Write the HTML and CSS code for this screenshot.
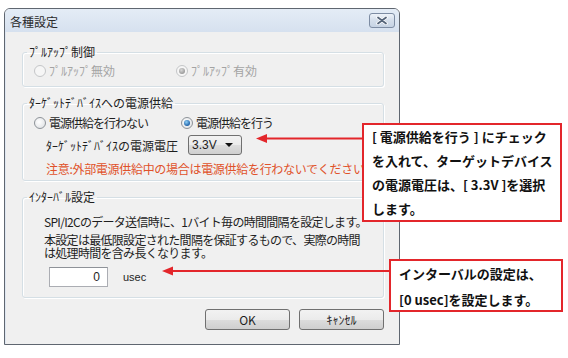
FILE: index.html
```html
<!DOCTYPE html>
<html lang="ja">

<head>
    <meta charset="UTF-8">
    <title>各種設定</title>
    <link rel="stylesheet" href="styles.css">
</head>

<body>
    <div class="page">
        <div class="window">
            <div class="titlebar">
                <span class="title">各種設定</span>
                <span class="close">
                    <svg width="12" height="9" viewBox="0 0 12 9">
                        <path d="M2 1.5 L10 7.5 M10 1.5 L2 7.5" stroke="#fff" stroke-width="3.4" stroke-linecap="round" />
                        <path d="M2 1.5 L10 7.5 M10 1.5 L2 7.5" stroke="#56657a" stroke-width="1.8" stroke-linecap="round" />
                    </svg>
                </span>
            </div>

            <div class="client">
                <fieldset class="group g-pullup">
                    <legend>ﾌﾟﾙｱｯﾌﾟ制御</legend>
                    <div class="radios">
                        <label class="opt off first"><span class="radio"></span>ﾌﾟﾙｱｯﾌﾟ無効</label>
                        <label class="opt off"><span class="radio on"></span>ﾌﾟﾙｱｯﾌﾟ有効</label>
                    </div>
                </fieldset>

                <fieldset class="group g-power">
                    <legend>ﾀｰｹﾞｯﾄﾃﾞﾊﾞｲｽへの電源供給</legend>
                    <div class="radios">
                        <label class="opt first"><span class="radio"></span>電源供給を行わない</label>
                        <label class="opt"><span class="radio on"></span>電源供給を行う</label>
                    </div>
                    <div class="voltage">
                        <span class="voltage-label">ﾀｰｹﾞｯﾄﾃﾞﾊﾞｲｽの電源電圧</span>
                        <span class="combo">3.3V<span class="caret"></span></span>
                    </div>
                    <div class="warning">注意:外部電源供給中の場合は電源供給を行わないでください。</div>
                </fieldset>

                <fieldset class="group g-interval">
                    <legend>ｲﾝﾀｰﾊﾞﾙ設定</legend>
                    <p class="desc">SPI/I2Cのデータ送信時に、1バイト毎の時間間隔を設定します。</p>
                    <p class="desc tight">本設定は最低限設定された間隔を保証するもので、実際の時間<br>は処理時間を含み長くなります。</p>
                    <div class="interval">
                        <span class="textbox">0</span>
                        <span class="unit">usec</span>
                    </div>
                </fieldset>

                <div class="buttons">
                    <button class="btn">OK</button>
                    <button class="btn">ｷｬﾝｾﾙ</button>
                </div>
            </div>
        </div>

        <!-- annotations -->
        <div class="note note-power">
            [ 電源供給を行う ] にチェック<br>を入れて、ターゲットデバイス<br>の電源電圧は、[ 3.3V ]を選択<br>します。
        </div>
        <div class="note note-interval">
            インターバルの設定は、<br>[0 usec]を設定します。
        </div>
        <svg class="arrows" width="568" height="358" viewBox="0 0 568 358">
            <line x1="265" y1="138.5" x2="362" y2="138.5" stroke="#e3262b" stroke-width="2" />
            <polygon points="256,138.5 267,134 267,143" fill="#e3262b" />
            <line x1="171" y1="271" x2="389" y2="271" stroke="#e3262b" stroke-width="2" />
            <polygon points="162,271 173,266.5 173,275.5" fill="#e3262b" />
        </svg>
    </div>
</body>

</html>
```

FILE: styles.css
```css
body {
    margin: 0;
    background-color: #ffffff;
    font-family: "Noto Sans CJK JP", sans-serif;
    font-size: 12px;
    color: #1e1e1e;
}

.page {
    position: relative;
    width: 568px;
    height: 358px;
    overflow: hidden;
    padding: 8px 0 0 4px;
    box-sizing: border-box;
}

/* window frame */
.window {
    width: 396px;
    box-sizing: border-box;
    border: 1px solid #5f6670;
    border-radius: 6px 6px 0 0;
    background-color: #f0f0f0;
    overflow: hidden;
}

.titlebar {
    height: 23px;
    display: flex;
    justify-content: space-between;
    align-items: flex-start;
    padding: 4px 4px 0 5px;
    box-sizing: border-box;
    background: linear-gradient(#e4ecf6, #d6e1ef);
}

.title {
    line-height: 17px;
    color: #2a2a2a;
}

.close {
    width: 26px;
    height: 15px;
    box-sizing: border-box;
    border: 1px solid #7d8ca3;
    border-radius: 3px;
    background: linear-gradient(#eef3f9, #d4deeb 50%, #c6d3e4);
    display: flex;
    align-items: center;
    justify-content: center;
}

.client {
    padding: 13px 15px 14px 16px;
    border-left: 1px solid #dfe7f1;
}

/* group boxes */
.group {
    margin: 0;
    padding: 0;
    min-inline-size: auto;
    border: 1px solid #d5dfe5;
    border-radius: 3px;
    box-shadow: 1px 1px 0 #ffffff, inset 1px 1px 0 #ffffff;
}

.group legend {
    margin-left: 4px;
    padding: 0 2px;
    line-height: 14px;
}

.g-pullup {
    padding-top: 5px;
    padding-bottom: 8px;
}

.g-power {
    margin-top: 9px;
    padding-top: 6px;
    padding-bottom: 4px;
}

.g-interval {
    margin-top: 9px;
    padding-top: 11px;
    padding-bottom: 10px;
}

.radios {
    display: flex;
    padding-left: 11px;
}

.opt {
    display: flex;
    align-items: center;
    line-height: 14px;
}

.g-pullup .first {
    width: 142px;
}

.g-power .opt {
    letter-spacing: -1px;
}

.g-power .first {
    width: 147px;
}

.opt.off {
    color: #a3a3a3;
}

.radio {
    position: relative;
    width: 12px;
    height: 12px;
    box-sizing: border-box;
    border-radius: 50%;
    border: 1px solid #8e9399;
    background: radial-gradient(circle at 40% 40%, #ffffff, #dadde0);
    margin-right: 3px;
}

.radio.on::after {
    content: "";
    position: absolute;
    left: 2px;
    top: 2px;
    width: 6px;
    height: 6px;
    border-radius: 50%;
    background: radial-gradient(circle at 40% 35%, #8fd0f8, #1f62a8 70%);
}

.off .radio {
    border-color: #c4c6c8;
    background: #f6f6f6;
}

.off .radio.on::after {
    background: radial-gradient(circle at 40% 35%, #d8d8d8, #9b9b9b 70%);
}

.voltage {
    display: flex;
    align-items: center;
    margin-top: 5px;
    padding-left: 23px;
}

.voltage-label {
    width: 142px;
}

.combo {
    position: relative;
    width: 54px;
    height: 20px;
    box-sizing: border-box;
    border: 1px solid #707070;
    border-radius: 3px;
    background: linear-gradient(#f2f2f2, #ebebeb 50%, #dddddd 51%, #cfcfcf);
    font-family: "Liberation Sans", sans-serif;
    font-size: 12px;
    line-height: 18px;
    padding-left: 3px;
}

.caret {
    position: absolute;
    right: 8px;
    top: 7px;
    border-left: 4px solid transparent;
    border-right: 4px solid transparent;
    border-top: 4px solid #111111;
}

.warning {
    margin-top: 7px;
    padding-left: 23px;
    line-height: 14px;
    color: #e0522a;
    letter-spacing: -0.3px;
    white-space: nowrap;
}

.desc {
    margin: 0;
    padding-left: 21px;
    line-height: 14px;
    letter-spacing: -0.7px;
    white-space: nowrap;
}

.desc.tight {
    margin-top: 4px;
    line-height: 13px;
}

.interval {
    display: flex;
    align-items: center;
    margin-top: 8px;
    padding-left: 26px;
}

.textbox {
    width: 59px;
    height: 20px;
    box-sizing: border-box;
    border: 1px solid #abadb3;
    border-top-color: #8e9298;
    background-color: #ffffff;
    text-align: right;
    padding-right: 7px;
    font-family: "Liberation Sans", sans-serif;
    font-size: 12px;
    line-height: 18px;
}

.unit {
    margin-left: 15px;
    font-family: "Liberation Sans", sans-serif;
    font-size: 11px;
}

.buttons {
    display: flex;
    justify-content: flex-end;
    gap: 9px;
    margin-top: 11px;
}

.btn {
    width: 85px;
    height: 21px;
    border: 1px solid #707070;
    border-radius: 3px;
    background: linear-gradient(#f2f2f2, #ebebeb 50%, #dddddd 51%, #cfcfcf);
    font-family: "Noto Sans CJK JP", sans-serif;
    font-size: 12px;
    color: #1e1e1e;
    padding: 0;
}

/* annotations */
.note {
    position: absolute;
    box-sizing: border-box;
    border: 2px solid #e3262b;
    background-color: #ffffff;
    font-weight: bold;
    font-size: 13px;
    color: #111111;
    white-space: nowrap;
}

.note-power {
    left: 362px;
    top: 123px;
    width: 200px;
    height: 99px;
    padding: 0 0 0 8px;
    line-height: 24px;
}

.note-interval {
    left: 389px;
    top: 259px;
    width: 174px;
    height: 53px;
    padding: 0 0 0 8px;
    line-height: 26px;
}

.arrows {
    position: absolute;
    left: 0;
    top: 0;
    pointer-events: none;
}
```
